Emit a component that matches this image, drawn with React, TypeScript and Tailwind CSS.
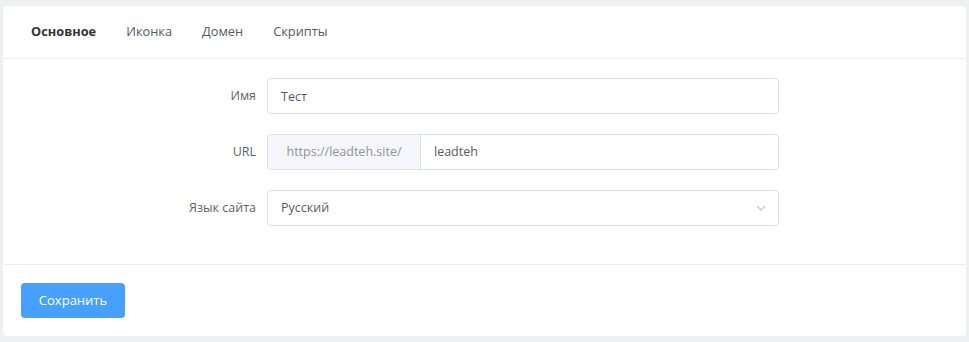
import { useState } from "react";

const tabs = ["Основное", "Иконка", "Домен", "Скрипты"];

export default function App() {
  const [active, setActive] = useState(0);

  return (
    <div className="min-h-screen bg-[#eef0f1] px-[3px] pt-[6px] font-['Open_Sans',sans-serif] text-[13px] text-[#555b61]">
      <div className="w-[963px] rounded-[4px] bg-white">
        <div className="flex h-[53px] items-center gap-[30px] border-b border-[#eceef0] px-[28px]">
          {tabs.map((t, i) => (
            <button
              key={t}
              onClick={() => setActive(i)}
              className={
                i === active
                  ? "text-[12.8px] font-bold text-[#333]"
                  : "text-[12.8px] text-[#555b61]"
              }
            >
              {t}
            </button>
          ))}
        </div>

        <div className="flex flex-col gap-[20px] pt-[19px] pb-[38px] text-[12.5px]">
          <div className="flex items-center">
            <label className="w-[264px] pr-[11px] text-right text-[#606266]">Имя</label>
            <input
              defaultValue="Тест"
              className="h-9 w-[512px] rounded-[4px] border border-[#dcdfe6] px-[13px] text-[#555b61] outline-none"
            />
          </div>

          <div className="flex items-center">
            <label className="w-[264px] pr-[11px] text-right text-[#606266]">URL</label>
            <div className="flex h-9 w-[512px] overflow-hidden rounded-[4px] border border-[#dcdfe6]">
              <div className="flex w-[153px] items-center justify-center border-r border-[#dcdfe6] bg-[#f5f6fa] text-[#909399]">
                https://leadteh.site/
              </div>
              <input
                defaultValue="leadteh"
                className="flex-1 px-[13px] text-[#555b61] outline-none"
              />
            </div>
          </div>

          <div className="flex items-center">
            <label className="w-[264px] pr-[11px] text-right text-[#606266]">Язык сайта</label>
            <div className="flex h-9 w-[512px] items-center justify-between rounded-[4px] border border-[#dcdfe6] pl-[13px] pr-[10px]">
              <span className="text-[#555b61]">Русский</span>
              <svg width="14" height="14" viewBox="0 0 14 14" fill="none" stroke="#c0c4cc" strokeWidth="1.2">
                <path d="M3 5l4 4 4-4" />
              </svg>
            </div>
          </div>
        </div>

        <div className="border-t border-[#eceef0] px-[18px] pt-[18px] pb-[18px]">
          <button className="h-[35px] w-[104px] rounded-[4px] bg-[#46a0fc] text-[13px] text-white">
            Сохранить
          </button>
        </div>
      </div>
    </div>
  );
}
